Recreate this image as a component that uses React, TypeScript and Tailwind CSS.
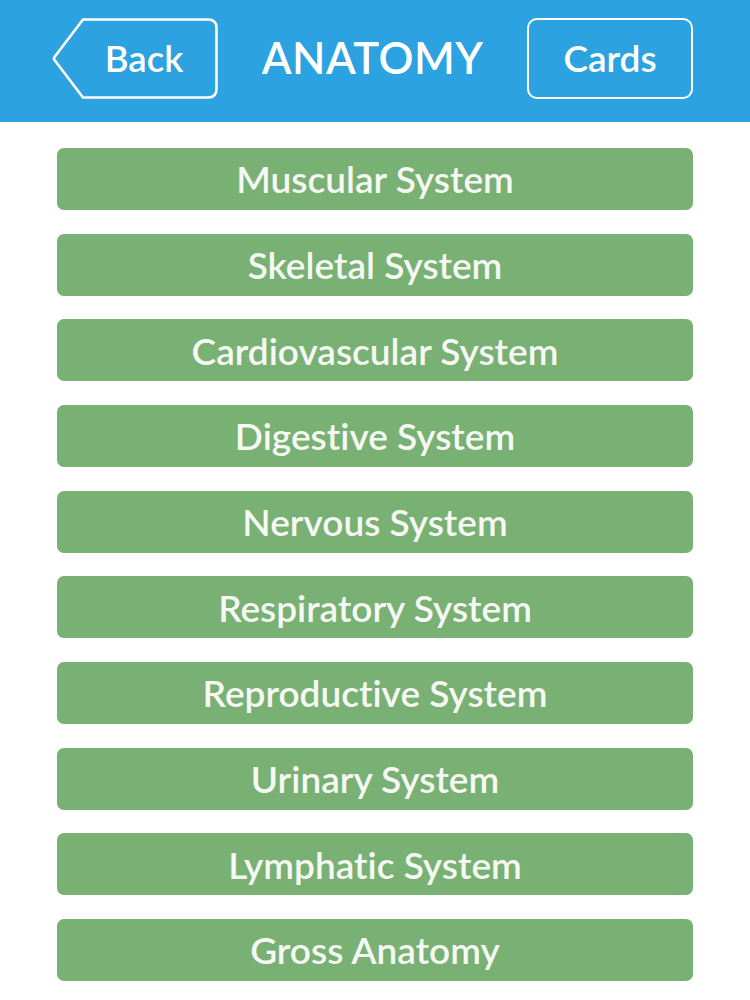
import * as React from "react";

const systems = [
  "Muscular System",
  "Skeletal System",
  "Cardiovascular System",
  "Digestive System",
  "Nervous System",
  "Respiratory System",
  "Reproductive System",
  "Urinary System",
  "Lymphatic System",
  "Gross Anatomy",
];

function BackButton() {
  return (
    <button className="relative flex h-[81px] w-[166px] items-center justify-center pl-[18px] text-[36.5px] font-semibold text-white">
      <svg
        className="absolute inset-0 h-full w-full"
        viewBox="0 0 166 81"
        fill="none"
      >
        <path
          d="M31 1.5 H156 Q164.5 1.5 164.5 10 V71 Q164.5 79.5 156 79.5 H31 L2.5 42 Q1.5 40.5 2.5 39 Z"
          stroke="white"
          strokeWidth="2.6"
          strokeLinejoin="round"
        />
      </svg>
      <span className="relative">Back</span>
    </button>
  );
}

export default function App() {
  return (
    <div
      className="min-h-[1000px] w-[750px] bg-white [font-variant-ligatures:none]"
      style={{ fontFamily: "Lato, 'Open Sans', sans-serif" }}
    >
      <header className="flex h-[122px] items-center justify-between bg-[#2ca3e0] pl-[52px] pr-[57px] pb-[6px]">
        <BackButton />
        <h1 className="text-[43.5px] font-semibold tracking-[0.5px] text-white">
          ANATOMY
        </h1>
        <button className="flex h-[81px] w-[166px] items-center justify-center rounded-[10px] border-[2.6px] border-white text-[37px] font-semibold text-white">
          Cards
        </button>
      </header>

      <main className="flex flex-col gap-[23.67px] px-[57px] pt-[26px]">
        {systems.map((name) => (
          <button
            key={name}
            className="flex h-[62px] w-full items-center justify-center rounded-[7px] bg-[#79b074] text-[37px] font-semibold text-[#f6f9f3]"
          >
            {name}
          </button>
        ))}
      </main>
    </div>
  );
}
